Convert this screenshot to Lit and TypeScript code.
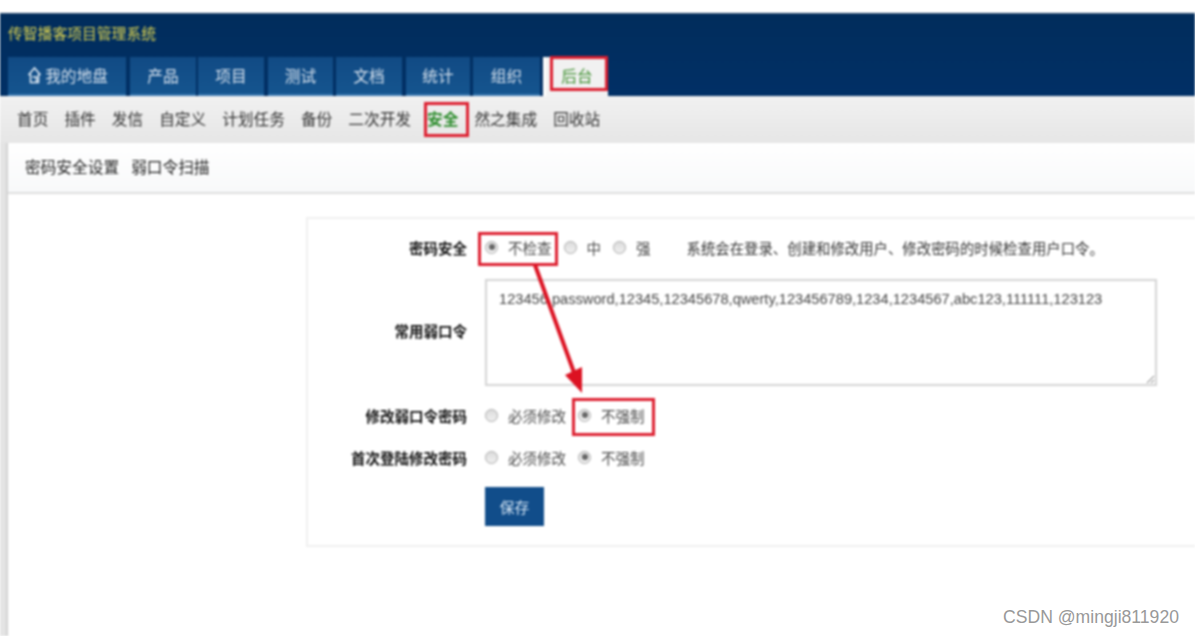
import { LitElement, html, css } from "lit";
import { customElement } from "lit/decorators.js";

const TABS = [
  { t: "产品", w: 66, g: 2 },
  { t: "项目", w: 66, g: 4 },
  { t: "测试", w: 65, g: 3 },
  { t: "文档", w: 66, g: 4 },
  { t: "统计", w: 64, g: 3 },
  { t: "组织", w: 67, g: 3 },
];
const SUB = ["首页", "插件", "发信", "自定义", "计划任务", "备份", "二次开发", "安全", "然之集成", "回收站"];
const WORDS = "123456,password,12345,12345678,qwerty,123456789,1234,1234567,abc123,111111,123123";

@customElement("app-root")
export class AppRoot extends LitElement {
  static styles = css`
    :host { display: block; width: 1195px; height: 636px; overflow: hidden; position: relative; background: #fff;
      font-family: "Liberation Sans", "Noto Sans CJK SC", sans-serif; }
    * { box-sizing: border-box; }
    .shot { height: 636px; display: flex; flex-direction: column; padding-top: 13px; filter: blur(0.8px); position: relative; background: #e4e4e4; }
    .shot::before { content: ""; position: absolute; left: 0; right: 0; top: 0; height: 13px; background: #fff; }
    .head { height: 83px; background: linear-gradient(#24476b 0, #012d5c 2px, #013066 100%); display: flex; flex-direction: column; }
    .title { height: 44px; padding: 12px 0 0 8px; font-size: 14.8px; line-height: 18px; color: #d8cf50; white-space: nowrap; }
    .tabs { display: flex; height: 39px; padding-left: 8px; }
    .tab { height: 39px; background: linear-gradient(#114a84, #15558f); color: #d5e0ec; font-size: 15.7px; display: flex; align-items: center; justify-content: center; gap: 3px; padding-bottom: 1px; white-space: nowrap; border-bottom: 2px solid #3a78b0; }
    .tab.home { width: 118px; margin-right: 4px; padding-left: 1px; }
    .tab.active { background: #f1f1f1; color: #3d8f2f; border-bottom: 0; border-left: 3px solid #fff; width: 65px; padding-bottom: 3px; }
    .tab svg { width: 15px; height: 18px; }
    .sub { height: 47px; background: linear-gradient(#f1f1f1, #e6e6e6); display: flex; align-items: center; gap: 16px; padding: 0 0 3px 17px; font-size: 15.7px; color: #333; white-space: nowrap; }
    .sub .on { color: #2c8c2c; font-weight: 700; }
    .main { flex: 1; margin-left: 6px; border-left: 2px solid #d2d2d2; background: #fff; display: flex; flex-direction: column; }
    .bar { height: 51px; background: linear-gradient(#fff, #f8f9fa); border-bottom: 2px solid #dedede; display: flex; align-items: center; gap: 12px; padding: 0 0 2px 17px; font-size: 15.7px; color: #222; white-space: nowrap; }
    .panel { margin: 23px 0 0 298px; height: 330px; background: #fff; border: 2px solid #f0f0f0; border-right: 0; padding-top: 12px; display: flex; flex-direction: column; }
    .row { display: flex; align-items: center; font-size: 14.5px; color: #4a4a4a; white-space: nowrap; }
    .label { width: 159px; text-align: right; color: #111; font-weight: 700; margin-right: 18px; }
    .r1 { height: 34px; padding-bottom: 2px; margin-bottom: 2px; }
    .r2 { height: 107px; margin-top: 12px; }
    .r2 .label { margin-bottom: 4px; }
    .r3 { height: 36px; margin-top: 11px; }
    .r4 { height: 36px; margin-top: 6px; }
    .r5 { margin-top: 12px; padding-left: 177px; }
    .radio { width: 13px; height: 13px; border-radius: 50%; border: 1px solid #aaa; background: linear-gradient(#dcdcdc, #f0f0f0); display: inline-flex; align-items: center; justify-content: center; flex: none; }
    .radio.on::after { content: ""; width: 6px; height: 6px; border-radius: 50%; background: #666; }
    .opt { display: flex; align-items: center; gap: 10px; }
    .sp { width: 12px; flex: none; }
    .hint { margin-left: 36px; color: #333; font-size: 14.4px; }
    textarea { width: 672px; height: 107px; border: 2px solid #d4d4d4; background: #fff; padding: 9px 12px; font: 14.65px/18px "Liberation Sans", sans-serif; color: #444; margin: 0; outline: none; display: block; }
    button { width: 59px; height: 39px; background: #114d8a; color: #d8e8f6; border: 0; font: 14.8px "Liberation Sans", "Noto Sans CJK SC", sans-serif; padding: 0; }
    .mark { position: absolute; border: 3px solid #dd1f30; pointer-events: none; }
    .m1 { left: 550px; top: 56px; width: 58px; height: 35px; }
    .m2 { left: 424px; top: 102px; width: 45px; height: 35px; }
    .m3 { left: 478px; top: 232px; width: 80px; height: 34px; }
    .m4 { left: 572px; top: 398px; width: 83px; height: 38px; }
    .arrow { position: absolute; left: 0; top: 0; width: 1195px; height: 636px; pointer-events: none; }
    .wm { position: absolute; left: 1003px; top: 607px; font-size: 17.6px; line-height: 20px; color: #999; white-space: nowrap; }
  `;

  private radio(label: string, on = false) {
    return html`<span class="opt"><span class="radio ${on ? "on" : ""}"></span>${label}</span>`;
  }

  render() {
    return html`
      <div class="shot">
        <div class="head">
          <div class="title">传智播客项目管理系统</div>
          <div class="tabs">
            <div class="tab home">
              <svg viewBox="0 0 15 18" fill="none" stroke="#e6eef6" stroke-width="1.5"><path d="M1.5 9 7.5 2l6 7M3.5 8v8.5h8V8M5.5 11h4v5.5"/></svg>
              我的地盘
            </div>
            ${TABS.map((t) => html`<div class="tab" style="width:${t.w}px;margin-right:${t.g}px">${t.t}</div>`)}
            <div class="tab active">后台</div>
          </div>
        </div>
        <div class="sub">
          ${SUB.map((s) => html`<span class=${s === "安全" ? "on" : ""}>${s}</span>`)}
        </div>
        <div class="main">
          <div class="bar"><span>密码安全设置</span><span>弱口令扫描</span></div>
          <div class="panel">
            <div class="row r1">
              <span class="label">密码安全</span>
              ${this.radio("不检查", true)}
              <span class="sp"></span>${this.radio("中")}
              <span class="sp"></span>${this.radio("强")}
              <span class="hint">系统会在登录、创建和修改用户、修改密码的时候检查用户口令。</span>
            </div>
            <div class="row r2">
              <span class="label">常用弱口令</span>
              <textarea .value=${WORDS}></textarea>
            </div>
            <div class="row r3">
              <span class="label">修改弱口令密码</span>
              ${this.radio("必须修改")}<span class="sp"></span>${this.radio("不强制", true)}
            </div>
            <div class="row r4">
              <span class="label">首次登陆修改密码</span>
              ${this.radio("必须修改")}<span class="sp"></span>${this.radio("不强制", true)}
            </div>
            <div class="r5"><button>保存</button></div>
          </div>
        </div>
        <div class="mark m1"></div>
        <div class="mark m2"></div>
        <div class="mark m3"></div>
        <div class="mark m4"></div>
        <svg class="arrow" viewBox="0 0 1195 636">
          <path d="M535 265 576 378" stroke="#dc1222" stroke-width="4" fill="none"/>
          <path d="M565 375 582 367V393Z" fill="#dc1222"/>
        </svg>
      </div>
      <div class="wm">CSDN @mingji811920</div>
    `;
  }
}
